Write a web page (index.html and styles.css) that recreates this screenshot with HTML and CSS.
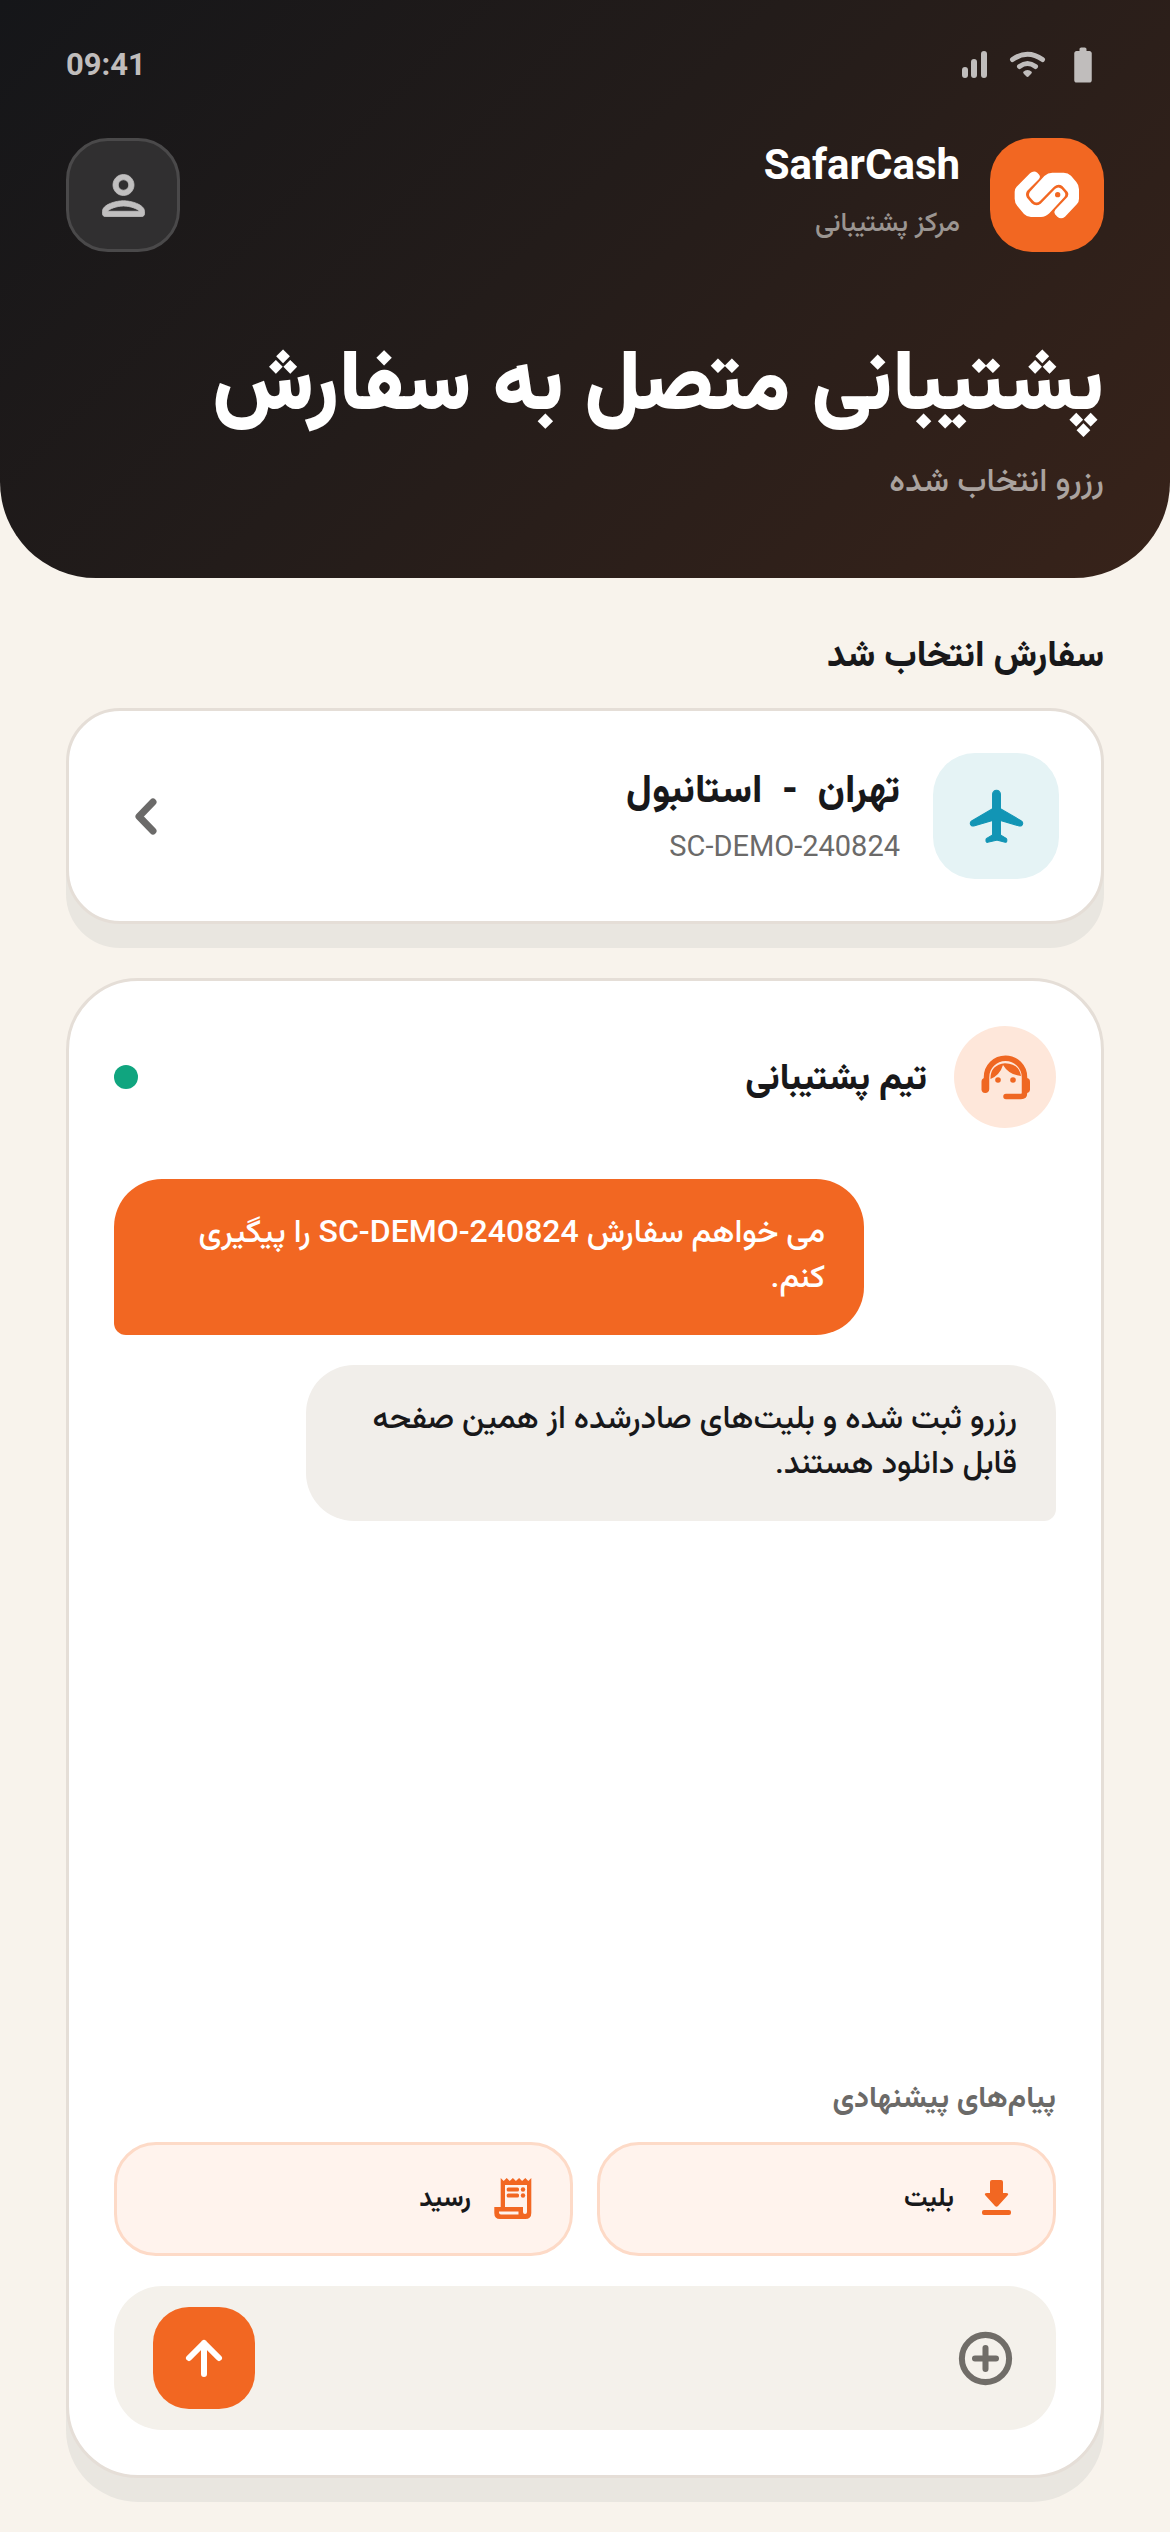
FILE: index.html
```html
<!DOCTYPE html>
<html lang="fa" dir="rtl">
<head>
    <meta charset="UTF-8">
    <meta name="viewport" content="width=device-width, initial-scale=1.0">
    <title>SafarCash</title>
    <link rel="stylesheet" href="styles.css">
</head>
<body>
    <header class="header">
        <div class="status-bar" dir="ltr">
            <span class="time">09:41</span>
            <div class="status-icons">
                <svg viewBox="0 0 42 42" fill="currentColor">
                    <rect x="8" y="23" width="6" height="11" rx="3"/>
                    <rect x="17" y="15" width="6" height="19" rx="3"/>
                    <rect x="27" y="7" width="6" height="27" rx="3"/>
                </svg>
                <svg viewBox="0 0 42 42" fill="none" stroke="currentColor" stroke-width="5" stroke-linecap="round">
                    <path d="M4.5 15.5Q19.5 5 34.5 15.5"/>
                    <path d="M11.5 22.5Q19.5 16.5 27.5 22.5"/>
                    <path d="M15 28q4.500-4 9 0q0 1.500-3 4q-1.500 1.800-3 0q-3-2.500-3-4z" fill="currentColor" stroke="none"/>
                </svg>
                <svg viewBox="0 0 24 24" fill="currentColor">
                    <path d="M15.670 4H14V3c0-.55-.45-1-1-1h-2c-.55 0-1 .45-1 1v1H8.330C7.600 4 7 4.600 7 5.330v15.330C7 21.400 7.600 22 8.340 22h7.320c.74 0 1.340-.6 1.340-1.330V5.330C17 4.600 16.400 4 15.670 4z"/>
                </svg>
            </div>
        </div>

        <div class="brand-row">
            <div class="brand">
                <div class="logo">
                    <svg viewBox="-45 -66 342 342" fill="#fff">
                        <path d="M75 40Q86 30 97 38L103 45Q107 51 102 57L66 93Q60 103 66 113L80 130Q93 141 107 131L150 87Q160 78 170 87L178 96Q184 103 178 111L133 160Q122 171 108 171H78Q66 171 57 162L37 138Q29 128 29 116V95Q29 86 35 80Z"/>
                        <path d="M118 48Q129 38 142 38H176Q189 38 198 47L214 66Q222 75 222 88V116Q222 125 216 132L180 170Q168 180 157 170L150 163Q145 156 151 149L188 110Q193 103 188 96L172 78Q160 69 147 80L105 123Q94 132 85 123L75 112Q69 104 75 95Z"/>
                        <circle cx="158" cy="104" r="8" fill="#f26722"/>
                    </svg>
                </div>
                <div class="brand-text">
                    <strong>SafarCash</strong>
                    <span>مرکز پشتیبانی</span>
                </div>
            </div>
            <button class="profile-button" aria-label="حساب کاربری">
                <svg viewBox="0 0 24 24" fill="currentColor">
                    <path d="M12 6c1.100 0 2 .9 2 2s-.9 2-2 2-2-.9-2-2 .9-2 2-2m0 10c2.700 0 5.800 1.290 6 2H6c.23-.72 3.310-2 6-2m0-12C9.790 4 8 5.790 8 8s1.790 4 4 4 4-1.790 4-4-1.790-4-4-4zm0 10c-2.670 0-8 1.340-8 4v1c0 .55.45 1 1 1h14c.55 0 1-.45 1-1v-1c0-2.660-5.330-4-8-4z" stroke="currentColor" stroke-width=".3"/>
                </svg>
            </button>
        </div>

        <h1>پشتیبانی متصل به سفارش</h1>
        <p class="subtitle">رزرو انتخاب شده</p>
    </header>

    <main class="main">
        <h2>سفارش انتخاب شد</h2>

        <a class="card order-card" href="#order">
            <span class="order-icon">
                <svg viewBox="0 0 24 24" fill="currentColor">
                    <path d="M21.480 13.700L13.500 9V3.500c0-.83-.67-1.500-1.500-1.500s-1.500.67-1.500 1.500V9l-7.980 4.700c-.32.18-.52.53-.52.9 0 .7.67 1.200 1.340 1.010l7.160-2.100V19l-2.260 1.350c-.15.09-.24.26-.24.43v.58c0 .33.31.57.62.49l2.920-.73L12 21l.38.09 2.920.73c.32.08.62-.16.62-.49v-.58c0-.18-.09-.34-.24-.43L13.500 19v-5.500l7.160 2.100c.67.19 1.340-.31 1.340-1.010 0-.37-.2-.72-.52-.89z" stroke="currentColor" stroke-width=".4"/>
                </svg>
            </span>
            <span class="order-text">
                <strong>تهران &nbsp;-&nbsp; استانبول</strong>
                <span>SC-DEMO-240824</span>
            </span>
            <svg class="chevron" viewBox="0 0 63 63" fill="none" stroke="currentColor" stroke-width="7" stroke-linecap="round" stroke-linejoin="round">
                <path d="M42 17L28 31.500L42 46"/>
            </svg>
        </a>

        <section class="card chat-card">
            <div class="chat-header">
                <span class="avatar">
                    <svg viewBox="0 0 57 57" fill="currentColor">
                        <path d="M9.500 40V28.200a19 19 0 0 1 38 0V44q0 3.500-3.500 3.500H29" fill="none" stroke="currentColor" stroke-width="5.500" stroke-linecap="round"/>
                        <rect x="4.500" y="29" width="7.500" height="15" rx="3.700"/>
                        <rect x="45" y="29" width="8" height="15" rx="3.700"/>
                        <circle cx="21" cy="31" r="2.800"/>
                        <circle cx="36" cy="31" r="2.800"/>
                        <path d="M13.500 30Q13 16 28 14.200Q42 14.500 44 27Q32 26 26 16Q23 26 13.500 30z"/>
                    </svg>
                </span>
                <h3>تیم پشتیبانی</h3>
                <span class="online-dot"></span>
            </div>

            <div class="messages">
                <p class="message sent">می خواهم سفارش SC-DEMO-240824 را پیگیری کنم.</p>
                <p class="message received">رزرو ثبت شده و بلیت‌های صادرشده از همین صفحه قابل دانلود هستند.</p>
            </div>

            <p class="suggestions-label">پیام‌های پیشنهادی</p>
            <div class="suggestions">
                <button>
                    <svg viewBox="0 0 54 54" fill="currentColor">
                        <path d="M23 8h9q2 0 2 2v11h3q3.500 0 1.500 2.500L29 34q-1.500 1.500-3 0L16.500 23.500Q14.500 21 18 21h3V10q0-2 2-2z"/>
                        <rect x="13" y="38" width="29" height="5" rx="2"/>
                    </svg>
                    <span>بلیت</span>
                </button>
                <button>
                    <svg viewBox="0 0 54 54" fill="currentColor">
                        <path fill-rule="evenodd" d="M14.700 6l3 3 3-3 3 3 3.200-3 3 3 3.200-3 3 3 3.200-3 3 3 3-3V41q0 6-6 6H14q-5.700 0-5.700-6V35h6.400zM19 13V35H37V40q0 2 2 2t2-2V13zM13 39.500V40.500q0 2 2 2H32.500V39.500z"/>
                        <rect x="20.700" y="15.500" width="12.300" height="4" rx="1.500"/>
                        <rect x="20.700" y="21.500" width="12.300" height="4" rx="1.500"/>
                        <circle cx="37" cy="17.500" r="2.200"/>
                        <circle cx="37" cy="23.500" r="2.200"/>
                    </svg>
                    <span>رسید</span>
                </button>
            </div>

            <form class="composer">
                <button type="button" class="attach-button" aria-label="افزودن پیوست">
                    <svg viewBox="0 0 24 24" fill="none" stroke="currentColor" stroke-width="2.300" stroke-linecap="round">
                        <circle cx="12" cy="12" r="9"/>
                        <path d="M12 8v8M8 12h8"/>
                    </svg>
                </button>
                <input type="text" aria-label="متن پیام">
                <button type="submit" class="send-button" aria-label="ارسال">
                    <svg viewBox="0 0 54 54" fill="none" stroke="currentColor" stroke-width="6" stroke-linecap="round" stroke-linejoin="round">
                        <path d="M27 43V12M12 27L27 12L42 27"/>
                    </svg>
                </button>
            </form>
        </section>
    </main>
</body>
</html>
```
FILE: styles.css
```css
* {
    box-sizing: border-box;
}
body {
    margin: 0;
    min-height: 100vh;
    display: flex;
    flex-direction: column;
    background-color: #f8f3ec;
    color: #18181a;
    font-family: Roboto, Vazirmatn, "Noto Sans Arabic", "DejaVu Sans", sans-serif;
}
h1, h2, h3, p {
    margin: 0;
}
button {
    padding: 0;
    border: none;
    font-family: inherit;
    cursor: pointer;
}
svg {
    display: block;
    flex: none;
}

/* Header */
.header {
    padding: 36px 66px 71px;
    border-radius: 0 0 96px 96px;
    background: linear-gradient(135deg, #151619 0%, #231c1a 45%, #38231a 100%);
    color: white;
}
.status-bar {
    display: flex;
    justify-content: space-between;
    align-items: center;
    height: 57px;
    color: #c0bdbc;
}
.time {
    font-size: 31px;
    font-weight: 700;
}
.status-icons {
    display: flex;
    gap: 12px;
}
.status-icons svg {
    width: 42px;
    height: 42px;
}
.brand-row {
    display: flex;
    justify-content: space-between;
    margin-top: 45px;
}
.brand {
    display: flex;
    align-items: center;
    gap: 30px;
}
.logo {
    width: 114px;
    height: 114px;
    border-radius: 42px;
    background-color: #f26722;
}
.brand-text {
    display: flex;
    flex-direction: column;
    gap: 6px;
    padding-bottom: 6px;
}
.brand-text strong {
    font-size: 42px;
    line-height: 54px;
}
.brand-text span {
    font-size: 27px;
    font-weight: 500;
    line-height: 48px;
    color: #9b9591;
}
.profile-button {
    display: flex;
    align-items: center;
    justify-content: center;
    width: 114px;
    height: 114px;
    border: 3px solid #4a494a;
    border-radius: 42px;
    background-color: #302f30;
    color: #c0bfbf;
}
.profile-button svg {
    width: 63px;
    height: 63px;
}
h1 {
    margin-top: 69px;
    font-size: 84px;
    font-weight: 900;
    line-height: 120px;
}
.subtitle {
    margin-top: 12px;
    font-size: 33px;
    font-weight: 500;
    line-height: 54px;
    color: #aaa39f;
}

/* Main */
.main {
    flex: 1;
    display: flex;
    flex-direction: column;
    padding: 49px 66px 54px;
}
h2 {
    margin-bottom: 27px;
    font-size: 36px;
    font-weight: 800;
    line-height: 54px;
}
.card {
    border: 3px solid #e5ded7;
    background-color: white;
    box-shadow: 0 24px 0 #e9e6e0;
}
.order-card {
    display: flex;
    align-items: center;
    gap: 33px;
    height: 216px;
    padding: 0 42px;
    border-radius: 54px;
    color: inherit;
    text-decoration: none;
}
.order-icon {
    display: flex;
    align-items: center;
    justify-content: center;
    width: 126px;
    height: 126px;
    border-radius: 42px;
    background-color: #e5f3f5;
    color: #1295b5;
}
.order-icon svg {
    width: 63px;
    height: 63px;
}
.order-text {
    flex: 1;
    display: flex;
    flex-direction: column;
    gap: 3px;
    padding-bottom: 3px;
}
.order-text strong {
    font-size: 39px;
    font-weight: 800;
    line-height: 60px;
}
.order-text span {
    font-size: 29px;
    line-height: 48px;
    color: #6b6a69;
}
.chevron {
    width: 63px;
    height: 63px;
    color: #6b6a69;
}

/* Chat */
.chat-card {
    flex: 1;
    display: flex;
    flex-direction: column;
    margin-top: 54px;
    padding: 45px;
    border-radius: 72px;
}
.chat-header {
    display: flex;
    align-items: center;
    gap: 27px;
}
.avatar {
    display: flex;
    align-items: center;
    justify-content: center;
    width: 102px;
    height: 102px;
    border-radius: 50%;
    background-color: #fee7da;
    color: #ef6722;
}
.avatar svg {
    width: 57px;
    height: 57px;
}
.chat-header h3 {
    flex: 1;
    font-size: 36px;
    font-weight: 800;
    line-height: 54px;
}
.online-dot {
    width: 24px;
    height: 24px;
    border-radius: 50%;
    background-color: #10a57f;
}
.messages {
    flex: 1;
    display: flex;
    flex-direction: column;
    gap: 30px;
    margin-top: 51px;
}
.message {
    max-width: 750px;
    padding: 30px 39px 36px;
    border-radius: 48px;
    font-size: 32px;
    font-weight: 500;
    line-height: 45px;
}
.sent {
    align-self: flex-end;
    border-bottom-left-radius: 12px;
    background-color: #f26722;
    color: white;
}
.received {
    border-bottom-right-radius: 12px;
    background-color: #f1eeea;
}
.suggestions-label {
    font-size: 30px;
    font-weight: 700;
    line-height: 48px;
    color: #6b6a68;
}
.suggestions {
    display: grid;
    grid-template-columns: 1fr 1fr;
    gap: 24px;
    margin: 21px 0 30px;
}
.suggestions button {
    display: flex;
    align-items: center;
    gap: 15px;
    height: 114px;
    padding: 0 30px;
    border: 3px solid #fddac7;
    border-radius: 42px;
    background-color: #fff3ed;
    color: #18181a;
    font-size: 26px;
    font-weight: 700;
}
.suggestions svg {
    width: 54px;
    height: 54px;
    color: #f26722;
}
.composer {
    display: flex;
    align-items: center;
    height: 144px;
    padding: 0 39px;
    border-radius: 48px;
    background-color: #f4f1eb;
}
.composer input {
    flex: 1;
    min-width: 0;
    margin: 0 24px;
    border: none;
    outline: none;
    background: none;
    font-family: inherit;
    font-size: 30px;
}
.attach-button {
    background: none;
    color: #706d68;
}
.attach-button svg {
    width: 63px;
    height: 63px;
}
.send-button {
    display: flex;
    align-items: center;
    justify-content: center;
    width: 102px;
    height: 102px;
    border-radius: 36px;
    background-color: #f26722;
    color: white;
}
.send-button svg {
    width: 54px;
    height: 54px;
}
```
